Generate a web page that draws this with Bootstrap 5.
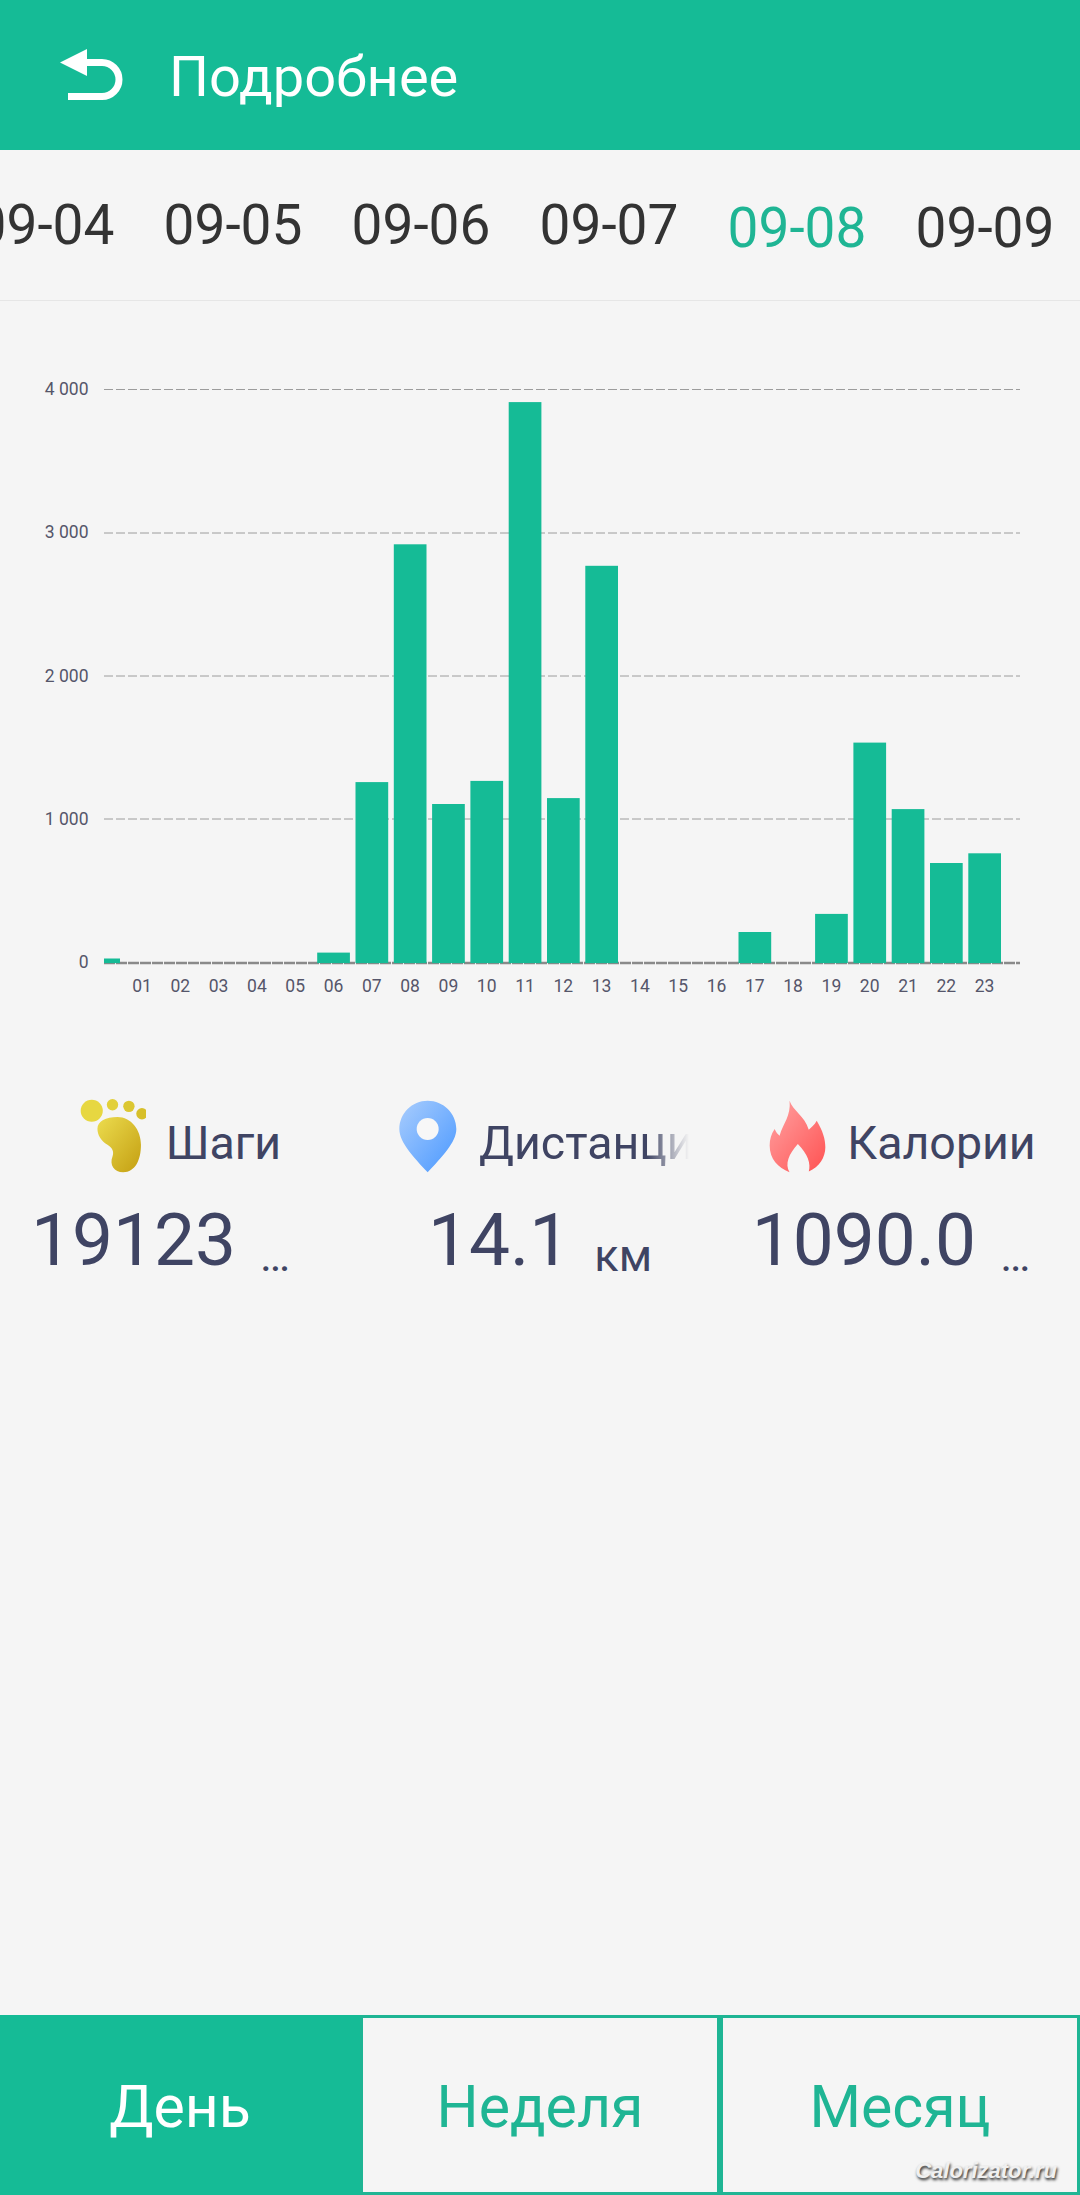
<!DOCTYPE html>
<html lang="ru">
<head>
    <meta charset="UTF-8" />
    <title>Подробнее</title>
    <meta name="viewport" content="width=device-width, initial-scale=1" />
    <link href="https://cdn.jsdelivr.net/npm/bootstrap@5.3.0/dist/css/bootstrap.min.css" rel="stylesheet" />
    <style>
        body {
            background-color: #f5f5f5;
            font-family: Roboto, "Liberation Sans", sans-serif;
            color: #3f4463;
        }
        .top-bar {
            height: 150px;
            background-color: #15bb96;
            color: #fff;
            padding-left: 60px;
        }
        .top-title {
            font-size: 56px;
            line-height: 1;
            margin-left: 39px;
            padding-top: 4px;
        }
        .date-strip {
            height: 151px;
            border-bottom: 1px solid #e6e6e6;
            margin-left: -49px;
            width: 1129px;
            overflow: hidden;
        }
        .date-cell {
            flex: 0 0 188px;
            font-size: 55px;
            line-height: 1;
            text-align: center;
            color: #333;
        }
        .date-low { padding-top: 6px; }
        .date-active { color: #1fb594; }
        .chart-box { padding-top: 49px; }
        .chart-box svg { display: block; }
        .tick {
            font-family: Roboto, sans-serif;
            font-size: 17.5px;
            fill: #55566a;
        }
        .tick-y { text-anchor: end; }
        .tick-x { text-anchor: middle; }
        .bar { fill: #15bb96; }
        .grid-line {
            stroke: #9c9c9c;
            stroke-width: 1;
            stroke-dasharray: 9 3;
        }
        .base-line {
            stroke: #8a8a8a;
            stroke-width: 2.5;
            stroke-dasharray: 11 1;
        }
        .stat-row { margin-top: 48px; }
        .stat-head {
            height: 76px;
            column-gap: 20px;
        }
        .stat-head-mid { padding-left: 6px; }
        .stat-head-end { padding-left: 4px; }
        .stat-name {
            font-size: 46.5px;
            line-height: 1;
            padding-top: 14px;
            white-space: nowrap;
        }
        .stat-clip {
            width: 210px;
            overflow: hidden;
            -webkit-mask-image: linear-gradient(to right, #000 168px, transparent 210px);
            mask-image: linear-gradient(to right, #000 168px, transparent 210px);
        }
        .stat-value {
            margin-top: 21px;
            white-space: nowrap;
            column-gap: 24px;
        }
        .stat-shift-lg { padding-right: 39px; }
        .stat-shift-sm { padding-right: 18px; }
        .stat-num {
            font-size: 73px;
            line-height: 90px;
        }
        .stat-unit {
            font-size: 45px;
            line-height: 58px;
        }
        .range-btn {
            flex: 0 0 360px;
            height: 180px;
            border: 3px solid #1fb594;
            border-radius: 0;
            background-color: #f5f5f5;
            color: #1fb594;
            font-family: Roboto, sans-serif;
            font-size: 59px;
            line-height: 1;
            padding: 3px 0 0;
        }
        .range-on {
            background-color: #15bb96;
            border-color: #15bb96;
            color: #fff;
        }
        .water-mark {
            right: 23px;
            bottom: 8px;
            font-family: "Liberation Sans", sans-serif;
            font-size: 22px;
            font-weight: 700;
            font-style: italic;
            color: #f0f0f0;
            text-shadow: 1px 2px 3px #222;
        }
    </style>
</head>
<body class="d-flex flex-column min-vh-100 position-relative overflow-hidden">

<header class="top-bar d-flex align-items-center">
    <svg width="70" height="52" viewBox="60 50 70 52" aria-hidden="true">
        <path d="M60 63.5 87 50V77Z" fill="#fff" />
        <path d="M85 63.5H102a17 17 0 0 1 0 34H68" fill="none" stroke="#fff" stroke-width="7" />
    </svg>
    <span class="top-title">Подробнее</span>
</header>

<div class="date-strip d-flex align-items-center">
    <div class="date-cell">09-04</div>
    <div class="date-cell">09-05</div>
    <div class="date-cell">09-06</div>
    <div class="date-cell">09-07</div>
    <div class="date-cell date-low date-active">09-08</div>
    <div class="date-cell date-low">09-09</div>
</div>

<div class="chart-box">
    <svg width="1080" height="700" viewBox="0 350 1080 700">
        <line class="grid-line" x1="104" x2="1020" y1="389.5" y2="389.5" />
        <line class="grid-line" x1="104" x2="1020" y1="533" y2="533" />
        <line class="grid-line" x1="104" x2="1020" y1="676" y2="676" />
        <line class="grid-line" x1="104" x2="1020" y1="819" y2="819" />
        <line class="base-line" x1="104" x2="1020" y1="963" y2="963" />

        <text class="tick tick-y" x="88.5" y="394.6">4 000</text>
        <text class="tick tick-y" x="88.5" y="537.7">3 000</text>
        <text class="tick tick-y" x="88.5" y="681.7">2 000</text>
        <text class="tick tick-y" x="88.5" y="824.8">1 000</text>
        <text class="tick tick-y" x="88.5" y="967.8">0</text>

        <rect class="bar" x="104" y="958.5" width="16" height="4.6" />
        <rect class="bar" x="317.2" y="952.6" width="32.7" height="10.5" />
        <rect class="bar" x="355.5" y="782.1" width="32.7" height="181" />
        <rect class="bar" x="393.8" y="544.3" width="32.7" height="418.8" />
        <rect class="bar" x="432.1" y="804" width="32.7" height="159.1" />
        <rect class="bar" x="470.4" y="780.9" width="32.7" height="182.2" />
        <rect class="bar" x="508.7" y="402.1" width="32.7" height="561" />
        <rect class="bar" x="547" y="798.1" width="32.7" height="165" />
        <rect class="bar" x="585.3" y="565.8" width="32.7" height="397.3" />
        <rect class="bar" x="738.5" y="932" width="32.7" height="31.1" />
        <rect class="bar" x="815.1" y="913.9" width="32.7" height="49.2" />
        <rect class="bar" x="853.4" y="742.6" width="32.7" height="220.5" />
        <rect class="bar" x="891.7" y="809.1" width="32.7" height="154" />
        <rect class="bar" x="930" y="863" width="32.7" height="100.1" />
        <rect class="bar" x="968.3" y="853.3" width="32.7" height="109.8" />

        <text class="tick tick-x" x="142" y="992">01</text>
        <text class="tick tick-x" x="180.3" y="992">02</text>
        <text class="tick tick-x" x="218.6" y="992">03</text>
        <text class="tick tick-x" x="256.9" y="992">04</text>
        <text class="tick tick-x" x="295.2" y="992">05</text>
        <text class="tick tick-x" x="333.5" y="992">06</text>
        <text class="tick tick-x" x="371.8" y="992">07</text>
        <text class="tick tick-x" x="410.1" y="992">08</text>
        <text class="tick tick-x" x="448.4" y="992">09</text>
        <text class="tick tick-x" x="486.7" y="992">10</text>
        <text class="tick tick-x" x="525" y="992">11</text>
        <text class="tick tick-x" x="563.3" y="992">12</text>
        <text class="tick tick-x" x="601.6" y="992">13</text>
        <text class="tick tick-x" x="639.9" y="992">14</text>
        <text class="tick tick-x" x="678.2" y="992">15</text>
        <text class="tick tick-x" x="716.5" y="992">16</text>
        <text class="tick tick-x" x="754.8" y="992">17</text>
        <text class="tick tick-x" x="793.1" y="992">18</text>
        <text class="tick tick-x" x="831.4" y="992">19</text>
        <text class="tick tick-x" x="869.7" y="992">20</text>
        <text class="tick tick-x" x="908" y="992">21</text>
        <text class="tick tick-x" x="946.3" y="992">22</text>
        <text class="tick tick-x" x="984.6" y="992">23</text>
    </svg>
</div>

<div class="row g-0 stat-row">
    <div class="col-4">
        <div class="stat-head d-flex justify-content-center align-items-center">
            <svg width="67" height="77" viewBox="60 40 200 230" aria-hidden="true">
                <defs>
                    <linearGradient id="footFill" x1="0" y1="0" x2="1" y2="1">
                        <stop offset="0" stop-color="#ecdc4e" />
                        <stop offset="1" stop-color="#c49f12" />
                    </linearGradient>
                </defs>
                <circle cx="98" cy="78" r="33" fill="#e7d741" />
                <circle cx="160" cy="60" r="17" fill="#e2d03a" />
                <circle cx="209" cy="65" r="17" fill="#dcc732" />
                <circle cx="248" cy="87" r="17" fill="#d7bf2a" />
                <path d="M175 97C215 97 245 135 245 180 245 225 228 262 192 262 165 262 150 240 160 215 165 200 160 190 145 180 125 168 115 150 115 132 115 110 140 97 175 97Z" fill="url(#footFill)" />
            </svg>
            <span class="stat-name">Шаги</span>
        </div>
        <div class="stat-value stat-shift-lg d-flex justify-content-center align-items-end">
            <span class="stat-num">19123</span>
            <span class="stat-unit">…</span>
        </div>
    </div>
    <div class="col-4">
        <div class="stat-head stat-head-mid d-flex justify-content-center align-items-center">
            <svg width="62" height="75" viewBox="50 40 186 225" aria-hidden="true">
                <defs>
                    <linearGradient id="pinFill" x1="0" y1="0" x2="1" y2="1">
                        <stop offset="0" stop-color="#a9cdfd" />
                        <stop offset="1" stop-color="#4a98ff" />
                    </linearGradient>
                </defs>
                <path d="M142 45C95 45 57 83 57 130 57 170 100 215 142 260 184 215 228 170 228 130 228 83 189 45 142 45Z" fill="url(#pinFill)" />
                <circle cx="142" cy="130" r="33" fill="#f7f7f7" />
            </svg>
            <span class="stat-name stat-clip">Дистанция</span>
        </div>
        <div class="stat-value d-flex justify-content-center align-items-end">
            <span class="stat-num">14.1</span>
            <span class="stat-unit">км</span>
        </div>
    </div>
    <div class="col-4">
        <div class="stat-head stat-head-end d-flex justify-content-center align-items-center">
            <svg width="59" height="75" viewBox="85 40 178 225" aria-hidden="true">
                <defs>
                    <linearGradient id="flameFill" x1="0" y1="0" x2="1" y2="1">
                        <stop offset="0" stop-color="#ffa3a3" />
                        <stop offset="1" stop-color="#ff5252" />
                    </linearGradient>
                </defs>
                <path d="M150 45C160 75 195 90 208 132 215 125 225 118 232 105 250 135 258 160 258 185 258 215 240 245 208 258 215 235 205 205 175 175 148 205 135 235 150 260 115 248 90 220 90 180 90 160 95 145 105 130 110 140 113 145 120 150 130 115 155 90 150 45Z" fill="url(#flameFill)" />
            </svg>
            <span class="stat-name">Калории</span>
        </div>
        <div class="stat-value stat-shift-sm d-flex justify-content-center align-items-end">
            <span class="stat-num">1090.0</span>
            <span class="stat-unit">…</span>
        </div>
    </div>
</div>

<div class="d-flex mt-auto">
    <button class="btn range-btn range-on" type="button">День</button>
    <button class="btn range-btn" type="button">Неделя</button>
    <button class="btn range-btn" type="button">Месяц</button>
</div>

<div class="water-mark position-absolute">Calorizator.ru</div>

<script src="https://cdn.jsdelivr.net/npm/bootstrap@5.3.0/dist/js/bootstrap.bundle.min.js"></script>
</body>
</html>
